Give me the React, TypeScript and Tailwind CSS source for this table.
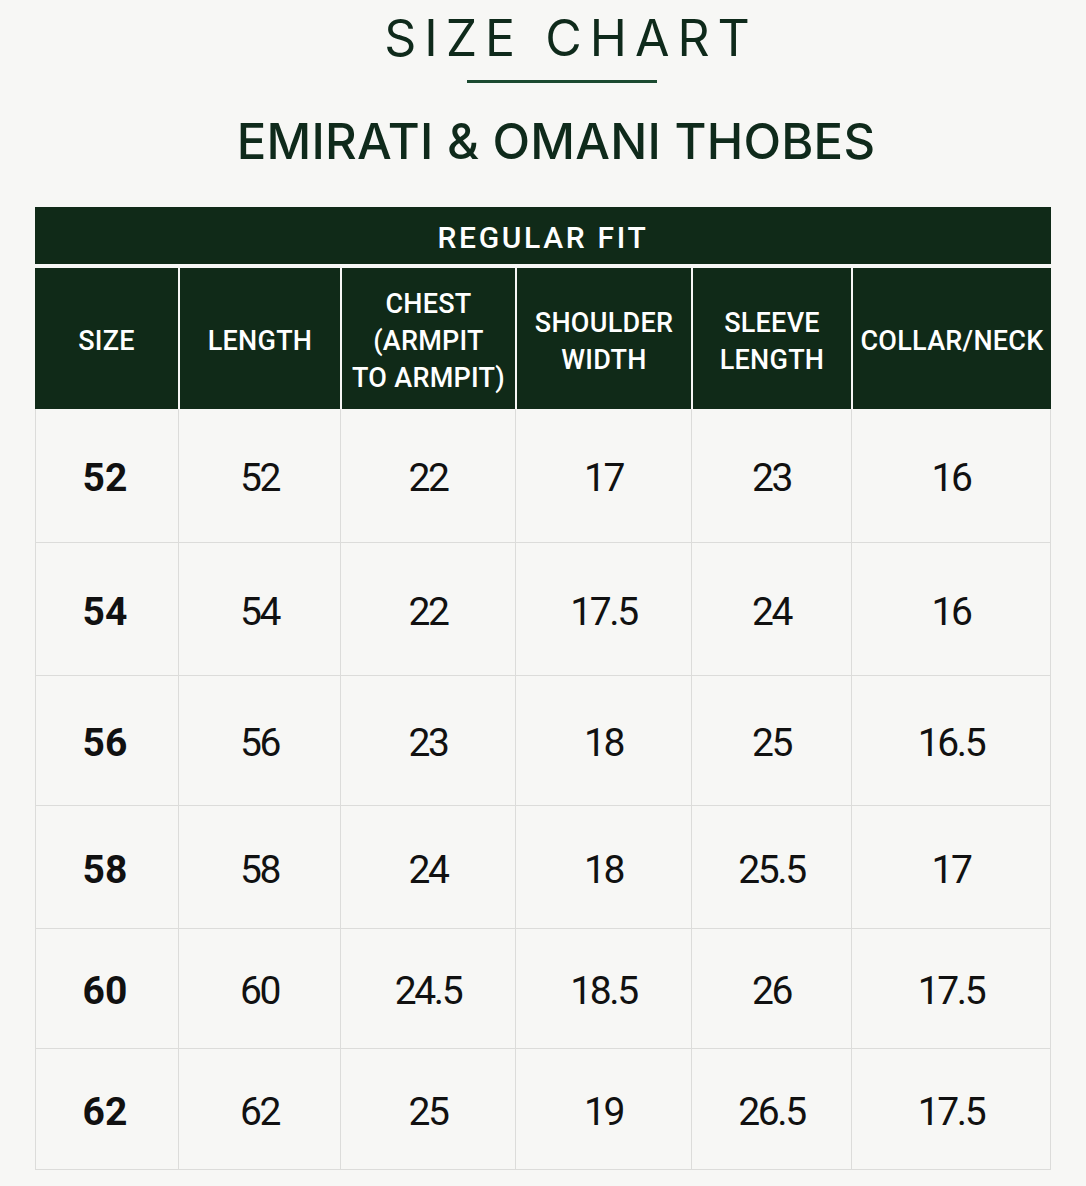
import React from 'react';

const headers = [
  ['SIZE'],
  ['LENGTH'],
  ['CHEST', '(ARMPIT', 'TO ARMPIT)'],
  ['SHOULDER', 'WIDTH'],
  ['SLEEVE', 'LENGTH'],
  ['COLLAR/NECK'],
];

const rows = [
  { h: 'h-[133px]', cells: ['52', '52', '22', '17', '23', '16'] },
  { h: 'h-[132px]', cells: ['54', '54', '22', '17.5', '24', '16'] },
  { h: 'h-[129px]', cells: ['56', '56', '23', '18', '25', '16.5'] },
  { h: 'h-[122px]', cells: ['58', '58', '24', '18', '25.5', '17'] },
  { h: 'h-[119px]', cells: ['60', '60', '24.5', '18.5', '26', '17.5'] },
  { h: 'h-[120px]', cells: ['62', '62', '25', '19', '26.5', '17.5'] },
];

export default function App() {
  return (
    <div className="min-h-[1186px] w-full bg-[#f7f7f5] px-[35px] pt-[13px] font-['Roboto',sans-serif]">
      {/* Titles */}
      <div className="flex flex-col items-center">
        <h1 className="ml-[48px] pl-[0.16em] text-[50px] font-normal leading-none tracking-[0.16em] text-[#0f2a1b] font-['Inter',sans-serif]">
          SIZE CHART
        </h1>
        <div className="ml-[38px] mt-[17px] h-[3px] w-[190px] bg-[#1b4a30]" />
        <h2 className="ml-[26px] mt-[34px] text-[49px] font-medium leading-none tracking-[0.005em] text-[#0f2a1b] font-['Inter',sans-serif]">
          EMIRATI &amp; OMANI THOBES
        </h2>
      </div>

      {/* Table */}
      <div className="mt-[41px] w-[1016px]">
        <div className="flex h-[57px] items-center justify-center bg-[#102a18] pt-[3px] text-[30px] font-medium tracking-[0.09em] text-white">
          REGULAR FIT
        </div>

        <div className="mt-[4px] grid h-[141px] grid-cols-[143px_160px_173px_174px_158px_1fr] gap-x-[2px]">
          {headers.map((lines, i) => (
            <div
              key={i}
              className="flex flex-col items-center justify-center bg-[#102a18] pt-[6px] text-center text-[27px] font-medium leading-[37px] tracking-[0.01em] text-white"
            >
              {lines.map((l) => (
                <span key={l}>{l}</span>
              ))}
            </div>
          ))}
        </div>

        <div className="flex flex-col gap-y-[1px] border-x border-b border-[#dcdcda] bg-[#dcdcda]">
          {rows.map((row) => (
            <div
              key={row.cells[0]}
              className={`grid ${row.h} grid-cols-[142px_161px_174px_175px_159px_1fr] gap-x-[1px]`}
            >
              {row.cells.map((c, i) => (
                <div
                  key={i}
                  className={
                    i === 0
                      ? 'flex items-center justify-center bg-[#f7f7f5] pr-[4px] pt-[6px] text-[39px] font-bold text-[#111111]'
                      : 'flex items-center justify-center bg-[#f7f7f5] pt-[6px] text-[39px] font-normal tracking-[-0.06em] text-[#111111]'
                  }
                >
                  {c}
                </div>
              ))}
            </div>
          ))}
        </div>
      </div>
    </div>
  );
}
